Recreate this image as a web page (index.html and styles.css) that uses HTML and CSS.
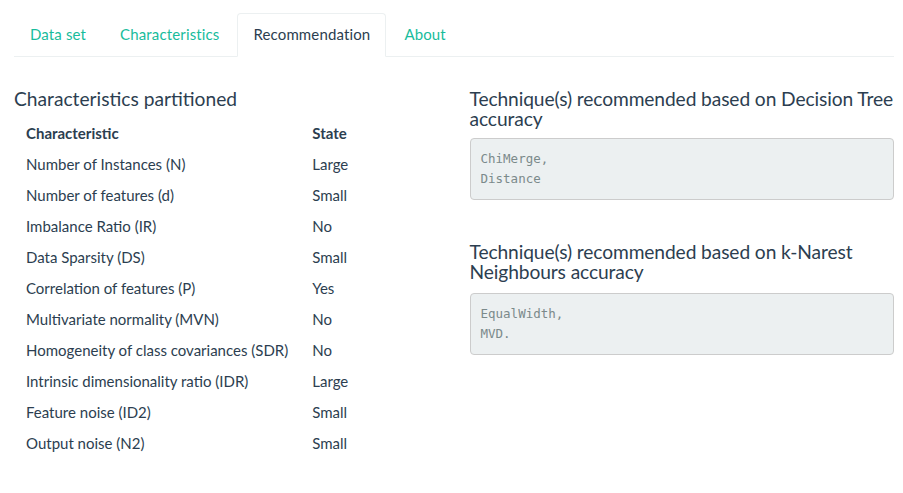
FILE: index.html
```html
<!DOCTYPE html>
<html>
<head>
<meta charset="utf-8">
<link rel="stylesheet" href="styles.css">
</head>
<body>
<div class="page">
  <ul class="tabs">
    <li class="tab"><a>Data set</a></li>
    <li class="tab"><a>Characteristics</a></li>
    <li class="tab active"><a>Recommendation</a></li>
    <li class="tab"><a>About</a></li>
  </ul>
  <div class="content">
    <div class="col">
      <h4 class="heading">Characteristics partitioned</h4>
      <table class="chars">
        <thead>
          <tr><th>Characteristic</th><th>State</th></tr>
        </thead>
        <tbody>
          <tr><td>Number of Instances (N)</td><td>Large</td></tr>
          <tr><td>Number of features (d)</td><td>Small</td></tr>
          <tr><td>Imbalance Ratio (IR)</td><td>No</td></tr>
          <tr><td>Data Sparsity (DS)</td><td>Small</td></tr>
          <tr><td>Correlation of features (P)</td><td>Yes</td></tr>
          <tr><td>Multivariate normality (MVN)</td><td>No</td></tr>
          <tr><td>Homogeneity of class covariances (SDR)</td><td>No</td></tr>
          <tr><td>Intrinsic dimensionality ratio (IDR)</td><td>Large</td></tr>
          <tr><td>Feature noise (ID2)</td><td>Small</td></tr>
          <tr><td>Output noise (N2)</td><td>Small</td></tr>
        </tbody>
      </table>
    </div>
    <div class="col">
      <h4 class="heading tight">Technique(s) recommended based on Decision Tree accuracy</h4>
      <pre class="result">ChiMerge,
Distance</pre>
      <h4 class="heading tight second">Technique(s) recommended based on k-Narest Neighbours accuracy</h4>
      <pre class="result result-second">EqualWidth,
MVD.</pre>
    </div>
  </div>
</div>
</body>
</html>
```

FILE: styles.css
```css
* { box-sizing: border-box; }
html, body {
  margin: 0;
  padding: 0;
  background: #ffffff;
}
body {
  font-family: Lato, "Open Sans", sans-serif;
  font-size: 15px;
  line-height: 21px;
  color: #2c3e50;
}
.page {
  padding: 13px 9px 0 14px;
}
.tabs {
  list-style: none;
  margin: 0;
  padding: 0;
  display: flex;
  border-bottom: 1px solid #ecf0f1;
}
.tab {
  margin-right: 2px;
  margin-bottom: -1px;
}
.tab a {
  display: block;
  padding: 10px 15px 11px;
  line-height: 21px;
  letter-spacing: 0.14px;
  color: #18bc9c;
  border: 1px solid transparent;
  border-radius: 4px 4px 0 0;
}
.tab.active a {
  color: #2c3e50;
  background: #ffffff;
  border-color: #ecf0f1 #ecf0f1 transparent;
}
.content {
  display: grid;
  grid-template-columns: 1fr 1fr;
  column-gap: 31px;
  padding-top: 32px;
}
.heading {
  margin: 0;
  font-size: 19.2px;
  font-weight: 400;
  line-height: 20px;
  color: #2c3e50;
}
.tight {
  letter-spacing: -0.1px;
}
.chars {
  border-collapse: collapse;
  margin-top: 9px;
}
.chars th, .chars td {
  text-align: left;
  padding: 5px 12px;
  line-height: 21px;
  vertical-align: top;
}
.chars th {
  font-weight: 700;
}
.result {
  margin: 9px 0 0;
  padding: 10px 10px;
  background: #ecf0f1;
  border: 1px solid #cccccc;
  border-radius: 4px;
  font-family: "DejaVu Sans Mono", "Liberation Mono", monospace;
  font-size: 12.5px;
  line-height: 20px;
  color: #7b8a8b;
}
.second {
  margin-top: 42px;
}
.result-second {
  margin-top: 11px;
}
```
